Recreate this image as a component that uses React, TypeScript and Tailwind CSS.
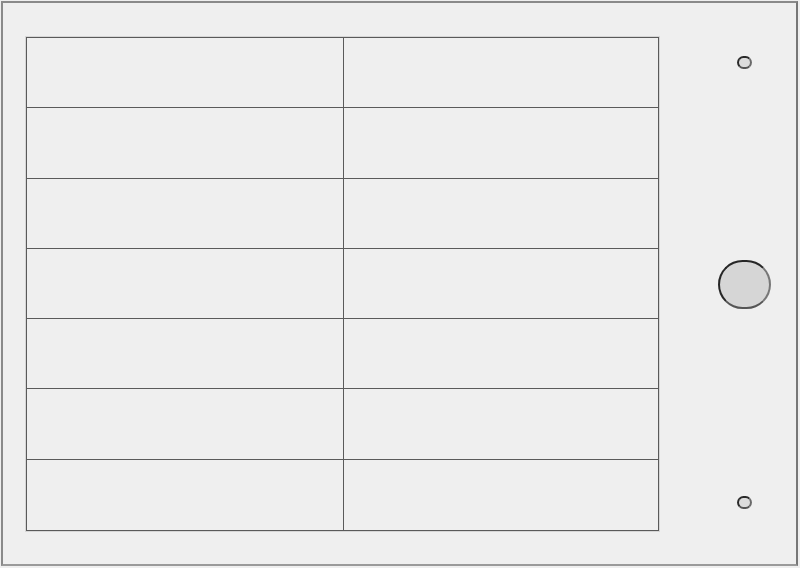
import React from "react";

export default function App() {
  const rows = Array.from({ length: 7 });
  return (
    <div className="w-[800px] h-[568px] bg-[#efefef] p-[1px]" style={{ fontFamily: '"Liberation Sans", sans-serif' }}>
      <div className="w-[797px] h-[565px] border-2 border-[#8a8a8a] border-r-[#777] border-b-[#9a9a9a] bg-[#efefef] flex pl-[23px] pt-[34px]">
        <div className="w-[633px] h-[494px] border border-[#5a5a5a] grid grid-cols-[317px_1fr] grid-rows-7 shadow-[0_0_0_1px_rgba(0,0,0,0.1)]">
          {rows.map((_, i) => (
            <React.Fragment key={i}>
              <div className={`border-r border-[#5a5a5a] ${i < 6 ? "border-b" : ""}`} />
              <div className={`border-[#5a5a5a] ${i < 6 ? "border-b" : ""}`} />
            </React.Fragment>
          ))}
        </div>
        <div className="ml-[57px] w-[56px] h-[494px] flex flex-col items-center justify-between pt-[19px] pb-[22px]">
          <div className="w-[15px] h-[13px] rounded-full bg-[#dcdcdc] border-2 border-[#2a2a2a] border-r-[#6a6a6a] border-b-[#555]" />
          <div className="mt-[3px] w-[53px] h-[49px] rounded-full bg-[#d6d6d6] border-2 border-[#262626] border-r-[#777] border-b-[#555]" />
          <div className="w-[15px] h-[13px] rounded-full bg-[#dcdcdc] border-2 border-[#2a2a2a] border-r-[#6a6a6a] border-b-[#555]" />
        </div>
      </div>
    </div>
  );
}
